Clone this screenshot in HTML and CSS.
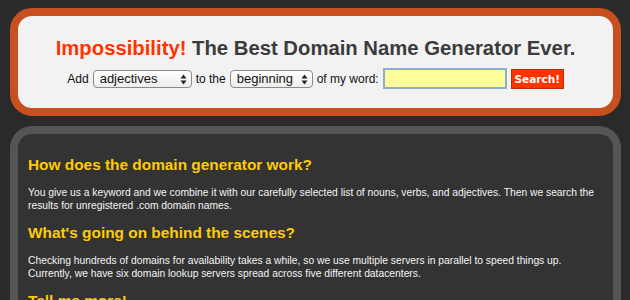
FILE: index.html
```html
<!DOCTYPE html>
<html>
<head>
<meta charset="utf-8">
<link rel="stylesheet" href="styles.css">
</head>
<body>
<div class="page">
  <header class="hero">
    <h1 class="title"><span class="brand">Impossibility!</span> The Best Domain Name Generator Ever.</h1>
    <form class="gen">
      <span class="lbl">Add</span>
      <span class="sel sel-a">
        <select><option>adjectives</option><option>nouns</option><option>verbs</option></select>
        <svg class="arr" width="7" height="11" viewBox="0 0 7 11"><path d="M0.5 4.5 L3.5 0.5 L6.5 4.5 Z M0.5 6.5 L3.5 10.5 L6.5 6.5 Z" fill="#222"/></svg>
      </span>
      <span class="lbl">to the</span>
      <span class="sel sel-b">
        <select><option>beginning</option><option>end</option></select>
        <svg class="arr" width="7" height="11" viewBox="0 0 7 11"><path d="M0.5 4.5 L3.5 0.5 L6.5 4.5 Z M0.5 6.5 L3.5 10.5 L6.5 6.5 Z" fill="#222"/></svg>
      </span>
      <span class="lbl">of my word:</span>
      <input class="word" type="text">
      <button class="go" type="button">Search!</button>
    </form>
  </header>
  <main class="info">
    <h2>How does the domain generator work?</h2>
    <p>You give us a keyword and we combine it with our carefully selected list of nouns, verbs, and adjectives. Then we search the results for unregistered .com domain names.</p>
    <h2>What's going on behind the scenes?</h2>
    <p>Checking hundreds of domains for availability takes a while, so we use multiple servers in parallel to speed things up. Currently, we have six domain lookup servers spread across five different datacenters.</p>
    <h2>Tell me more!</h2>
  </main>
</div>
</body>
</html>
```
FILE: styles.css
```css
html, body {
  margin: 0;
  padding: 0;
  background: #2a2a2a;
  font-family: "Liberation Sans", Arial, sans-serif;
  overflow: hidden;
}
.page {
  padding: 8px 9px 0 10px;
  display: flex;
  flex-direction: column;
  gap: 10px;
  height: 300px;
  box-sizing: border-box;
}
.hero {
  border: 8px solid #c85020;
  border-radius: 22px;
  background: #f2f2f2;
  height: 92px;
  flex: none;
  text-align: center;
}
.title {
  margin: 20px 0 0;
  font-size: 20.3px;
  line-height: 24px;
  font-weight: bold;
  color: #3b3b3b;
}
.brand { color: #ff3300; }
.gen {
  margin-top: 8px;
  display: flex;
  justify-content: center;
  align-items: center;
  gap: 4px;
  font-size: 12px;
  color: #111;
}
.sel {
  position: relative;
  display: block;
}
.sel select {
  -webkit-appearance: none;
  appearance: none;
  height: 18px;
  border: 1px solid #8a8a8a;
  border-radius: 4px;
  background: linear-gradient(#ffffff, #ededed);
  font-family: "Liberation Sans", Arial, sans-serif;
  font-size: 13px;
  color: #111;
  padding: 0 0 0 6px;
  margin: 0;
  display: block;
}
.sel-a select { width: 99px; }
.sel-b select { width: 83px; }
.arr {
  position: absolute;
  right: 5px;
  top: 4px;
  pointer-events: none;
}
.word {
  width: 120px;
  height: 17px;
  border: 2px solid #8caed0;
  background: #fffd99;
  margin: 0;
  padding: 0;
  box-sizing: content-box;
}
.go {
  width: 53px;
  height: 20px;
  padding: 0;
  border: 1px solid #b83000;
  background: #ff3300;
  color: #fff;
  font-family: "DejaVu Sans", sans-serif;
  font-weight: bold;
  font-size: 10.5px;
  margin: 0;
}
.info {
  flex: 1;
  border: 8px solid #555;
  border-bottom: none;
  border-radius: 22px 22px 0 0;
  background: #333;
  padding: 22px 10px 0;
}
.info h2 {
  margin: 0;
  font-size: 15.4px;
  line-height: 18px;
  color: #ffcc00;
  font-weight: bold;
}
.info p {
  margin: 12px 0 12px;
  font-size: 10.3px;
  line-height: 13px;
  color: #f4f4f4;
}
```
